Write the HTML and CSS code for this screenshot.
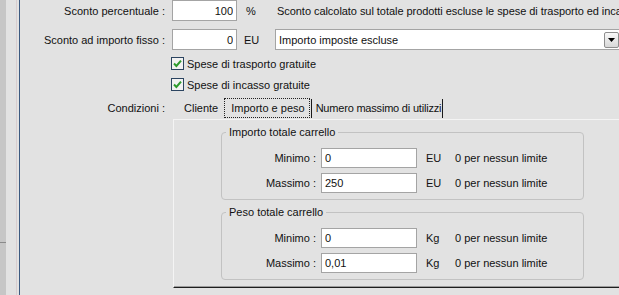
FILE: index.html
```html
<!DOCTYPE html>
<html lang="it">
  <head>
    <meta charset="UTF-8" />
    <title>Sconto</title>
    <link rel="stylesheet" href="styles.css">
  </head>
  <body>
    <div class="window">
      <!-- Left window edge -->
      <div class="side"><div class="side-top"></div></div>
      <div class="gutter"></div>

      <div class="frame">
        <div class="row row-first">
          <span class="lbl">Sconto percentuale :</span>
          <div class="field">
            <input class="text-input num" type="text" value="100" />
            <span class="unit unit-pct">%</span>
            <span class="note">Sconto calcolato sul totale prodotti escluse le spese di trasporto ed incasso</span>
          </div>
        </div>

        <div class="row row-second">
          <span class="lbl">Sconto ad importo fisso :</span>
          <div class="field">
            <input class="text-input num" type="text" value="0" />
            <span class="unit unit-eu">EU</span>
            <div class="select">
              <span>Importo imposte escluse</span>
              <span class="select-btn">
                <svg width="7" height="4" viewBox="0 0 7 4"><path d="M0 0H7L3.5 4Z" fill="#000"/></svg>
              </span>
            </div>
          </div>
        </div>

        <div class="row row-check row-check-first">
          <span></span>
          <label class="check">
            <svg width="13" height="13" viewBox="0 0 13 13">
              <rect x="0.5" y="0.5" width="12" height="12" fill="#f2f2f2" stroke="#2b4460"/>
              <path d="M3 6.5L5.4 9L10 3.6" stroke="#2e9b2e" stroke-width="2" fill="none"/>
            </svg>
            Spese di trasporto gratuite
          </label>
        </div>

        <div class="row row-check">
          <span></span>
          <label class="check">
            <svg width="13" height="13" viewBox="0 0 13 13">
              <rect x="0.5" y="0.5" width="12" height="12" fill="#f2f2f2" stroke="#2b4460"/>
              <path d="M3 6.5L5.4 9L10 3.6" stroke="#2e9b2e" stroke-width="2" fill="none"/>
            </svg>
            Spese di incasso gratuite
          </label>
        </div>

        <!-- Conditions tabs -->
        <div class="row row-tabs">
          <span class="lbl lbl-tabs">Condizioni :</span>
          <div class="tabs-col">
            <div class="tab-strip">
              <span class="tab tab-cliente">Cliente</span>
              <span class="tab tab-active"><span class="focus">Importo e peso</span></span>
              <span class="tab tab-numero">Numero massimo di utilizzi</span>
            </div>

            <div class="panel">
              <fieldset class="group">
                <legend>Importo totale carrello</legend>
                <div class="grp-row">
                  <span class="grp-lbl">Minimo :</span>
                  <input class="text-input grp-input" type="text" value="0" />
                  <span class="grp-unit">EU</span>
                  <span>0 per nessun limite</span>
                </div>
                <div class="grp-row">
                  <span class="grp-lbl">Massimo :</span>
                  <input class="text-input grp-input" type="text" value="250" />
                  <span class="grp-unit">EU</span>
                  <span>0 per nessun limite</span>
                </div>
              </fieldset>

              <fieldset class="group group-second">
                <legend>Peso totale carrello</legend>
                <div class="grp-row">
                  <span class="grp-lbl">Minimo :</span>
                  <input class="text-input grp-input" type="text" value="0" />
                  <span class="grp-unit">Kg</span>
                  <span>0 per nessun limite</span>
                </div>
                <div class="grp-row">
                  <span class="grp-lbl">Massimo :</span>
                  <input class="text-input grp-input" type="text" value="0,01" />
                  <span class="grp-unit">Kg</span>
                  <span>0 per nessun limite</span>
                </div>
              </fieldset>
            </div>
          </div>
        </div>
      </div>
    </div>
  </body>
</html>
```

FILE: styles.css
```css
/* Global Styles */
* {
  margin: 0;
  padding: 0;
  box-sizing: border-box;
}
body {
  font-family: "Liberation Sans", Arial, sans-serif;
  font-size: 11px;
  color: #111;
  background: #e2e2e2;
  width: 619px;
  height: 295px;
  overflow: hidden;
}

/* Window edges */
.window {
  display: flex;
  height: 295px;
}
.side {
  width: 6px;
  background: #c6c6c6;
}
.side-top {
  height: 243px;
  border-bottom: 1px solid #8a8a8a;
}
.gutter {
  width: 11px;
  border-right: 1px solid #d8cdcf;
}
.frame {
  flex: 1;
  min-width: 0;
  margin-left: 2px;
  border-left: 1px solid #3c5a80;
}

/* Form rows */
.row {
  display: grid;
  grid-template-columns: 145px 1fr;
  column-gap: 7px;
  align-items: center;
}
.row-first {
  height: 21px;
}
.row-second {
  height: 21px;
  margin-top: 8px;
}
.row-check {
  height: 21px;
}
.row-check-first {
  margin-top: 3px;
}
.row-tabs {
  margin-top: 2px;
  align-items: start;
}

.lbl {
  text-align: right;
  white-space: nowrap;
}
.lbl-tabs {
  line-height: 22px;
}

.field {
  display: flex;
  align-items: center;
  white-space: nowrap;
}

.text-input {
  height: 21px;
  border: 1px solid #a4a4a4;
  background: #fff;
  font: inherit;
  color: inherit;
  padding: 0 3px;
  outline: none;
}
.num {
  width: 65px;
  text-align: right;
}
.unit {
  width: 31px;
  flex-shrink: 0;
}
.unit-pct {
  margin-left: 9px;
}
.unit-eu {
  margin-left: 7px;
}
.note {
  letter-spacing: -0.05px;
}

/* Dropdown */
.select {
  width: 346px;
  height: 21px;
  flex-shrink: 0;
  border: 1px solid #a4a4a4;
  background: #fff;
  display: flex;
  align-items: center;
  justify-content: space-between;
  padding-left: 3px;
  padding-right: 1px;
}
.select-btn {
  width: 15px;
  height: 16px;
  border: 1px solid #8e8e8e;
  border-radius: 2px;
  background: linear-gradient(#f8f8f8, #d8d8d8);
  display: flex;
  align-items: center;
  justify-content: center;
}

/* Checkboxes */
.check {
  display: flex;
  align-items: center;
  gap: 3px;
  margin-left: -1px;
  white-space: nowrap;
}

/* Tabs */
.tabs-col {
  margin-left: 1px;
}
.tab-strip {
  height: 22px;
  display: flex;
  align-items: center;
  white-space: nowrap;
}
.tab-cliente {
  padding-left: 11px;
  padding-right: 6px;
}
.tab-active {
  margin-right: 1px;
}
.focus {
  display: block;
  height: 20px;
  line-height: 18px;
  border: 1px dotted #222;
  padding: 0 4px 0 6px;
}
.tab-numero {
  height: 19px;
  line-height: 19px;
  border-left: 1px solid #1a1a1a;
  border-right: 1px solid #1a1a1a;
  padding: 0 1px 0 4px;
  letter-spacing: -0.2px;
}

.panel {
  height: 169px;
  border-top: 1px solid #f4f4f4;
  border-left: 1px solid #f4f4f4;
  border-bottom: 1px solid #1e1e1e;
  box-shadow: inset 0 -1px 0 #9c9c9c;
  padding: 6px 0 0 47px;
}

/* Group boxes */
.group {
  width: 363px;
  border: 1px solid #c2c2c2;
  border-radius: 4px;
  padding: 9px 0 6px;
  display: flex;
  flex-direction: column;
  gap: 5px;
}
.group legend {
  margin-left: 4px;
  padding: 0 3px;
  line-height: 13px;
}
.group-second {
  margin-top: 6px;
}
.grp-row {
  display: flex;
  align-items: center;
  height: 20px;
  white-space: nowrap;
}
.grp-lbl {
  width: 94px;
  margin-right: 5px;
  text-align: right;
}
.grp-input {
  width: 96px;
  height: 20px;
}
.grp-unit {
  width: 29px;
  margin-left: 9px;
}
```
